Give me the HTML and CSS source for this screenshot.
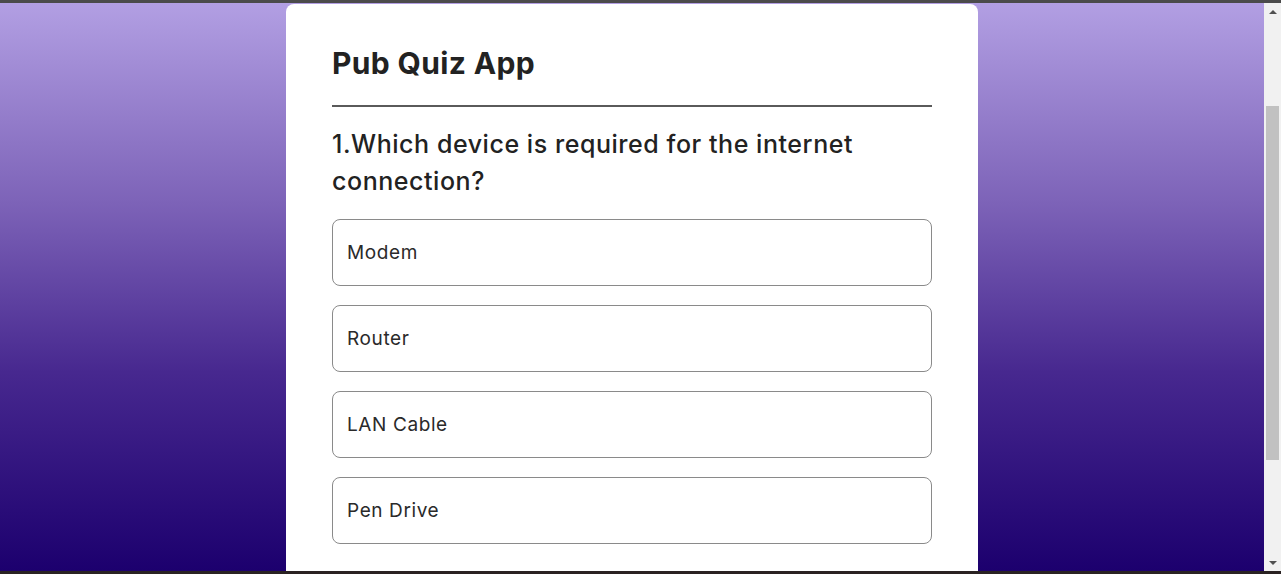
FILE: index.html
```html
<!DOCTYPE html>
<html lang="en">
<head>
<meta charset="utf-8">
<title>Pub Quiz App</title>
<link rel="stylesheet" href="styles.css">
</head>
<body>
  <div class="chrome-top"></div>
  <div class="viewport">
    <main class="page">
      <section class="card">
        <h1 class="title">Pub Quiz App</h1>
        <hr class="rule">
        <h2 class="question">1.Which device is required for the internet connection?</h2>
        <ul class="options">
          <li class="option">Modem</li>
          <li class="option">Router</li>
          <li class="option">LAN Cable</li>
          <li class="option">Pen Drive</li>
        </ul>
      </section>
    </main>
    <div class="scrollbar">
      <div class="sb-btn"><span class="arrow-up"></span></div>
      <div class="sb-track"><div class="sb-thumb"></div></div>
      <div class="sb-btn"><span class="arrow-down"></span></div>
    </div>
  </div>
  <div class="chrome-bottom"></div>
</body>
</html>
```

FILE: styles.css
```css
* { box-sizing: border-box; }

html, body {
  margin: 0;
  height: 574px;
  overflow: hidden;
}

body {
  display: flex;
  flex-direction: column;
  font-family: "Inter", "Open Sans", sans-serif;
  color: #222;
  background: #3a3a3a;
}

.chrome-top {
  height: 3px;
  background: #4b4b4b;
  flex: none;
}

.chrome-bottom {
  height: 3px;
  background: #2a2222;
  flex: none;
}

.viewport {
  flex: 1;
  display: flex;
  min-height: 0;
}

.page {
  flex: 1;
  display: flex;
  justify-content: center;
  padding-top: 1px;
  background: linear-gradient(to bottom, #b29fe3 0%, #7d63b8 35%, #47288f 65%, #1c006e 100%);
  overflow: hidden;
}

.card {
  width: 692px;
  background: #fff;
  border-radius: 8px 8px 0 0;
  padding: 0 46px;
}

.title {
  margin: 37px 0 0;
  font-size: 30px;
  font-weight: 700;
  line-height: 44px;
  letter-spacing: 0.35px;
  color: #222;
}

.rule {
  margin: 20px 0 0;
  border: 0;
  height: 2px;
  background: #5a5a5a;
}

.question {
  margin: 19px 0 0;
  font-size: 25px;
  font-weight: 500;
  line-height: 37px;
  letter-spacing: 0.55px;
  color: #222;
}

.options {
  list-style: none;
  margin: 19px 0 0;
  padding: 0;
  display: flex;
  flex-direction: column;
  gap: 19px;
}

.option {
  height: 67px;
  display: flex;
  align-items: center;
  padding: 0 14px;
  border: 1px solid #8a8a8a;
  border-radius: 8px;
  font-size: 19px;
  letter-spacing: 0.6px;
  color: #2a2a2a;
}

.scrollbar {
  width: 17px;
  flex: none;
  background: #f1f1f1;
  display: flex;
  flex-direction: column;
}

.sb-btn {
  height: 17px;
  display: flex;
  align-items: center;
  justify-content: center;
}

.arrow-up {
  width: 0;
  height: 0;
  border-left: 4px solid transparent;
  border-right: 4px solid transparent;
  border-bottom: 4px solid #505050;
}

.arrow-down {
  width: 0;
  height: 0;
  border-left: 4px solid transparent;
  border-right: 4px solid transparent;
  border-top: 4px solid #505050;
}

.sb-track {
  flex: 1;
  padding: 86px 2px 0;
}

.sb-thumb {
  height: 354px;
  background: #c1c1c1;
}
```
